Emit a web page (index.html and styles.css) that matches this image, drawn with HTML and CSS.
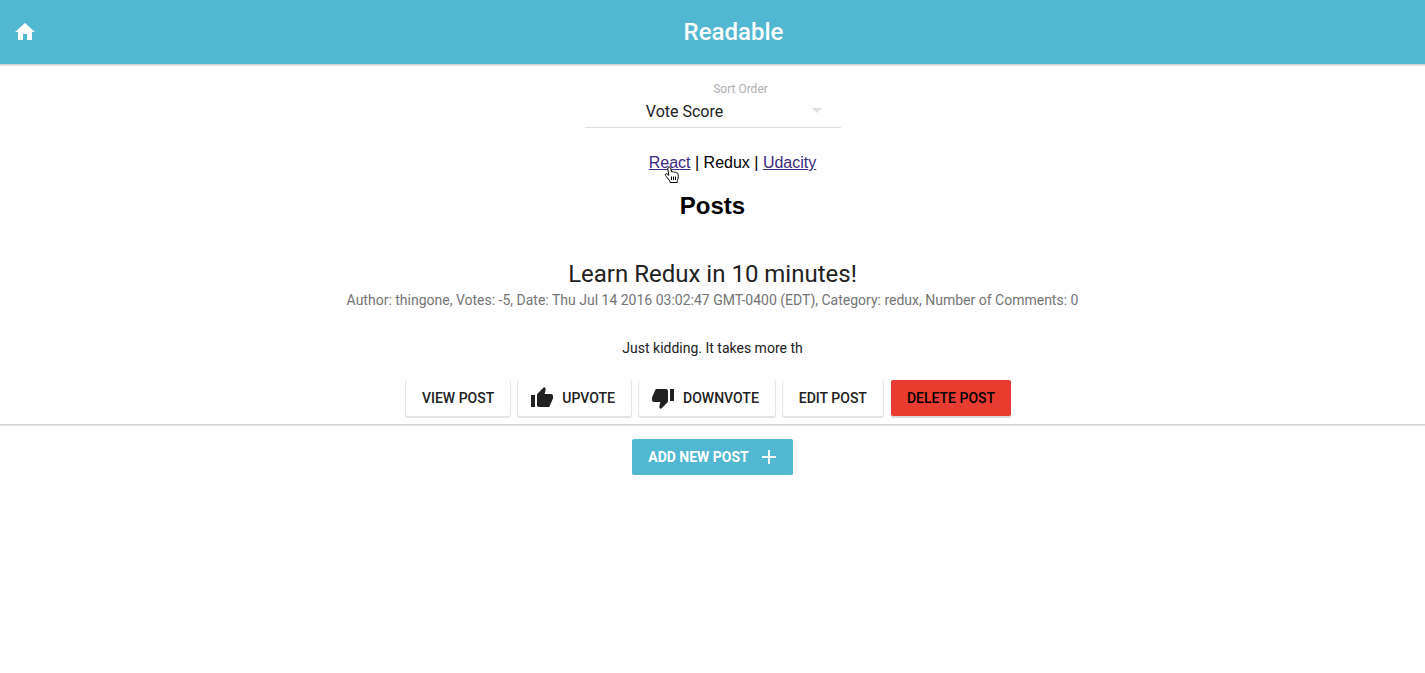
FILE: index.html
```html
<!DOCTYPE html>
<html lang="en">
<head>
<meta charset="utf-8">
<title>Readable</title>
<link rel="stylesheet" href="styles.css">
</head>
<body>
<header class="app-bar">
  <a class="home" href="#" aria-label="Home"><svg class="icon" viewBox="0 0 24 24"><path d="M10 20v-6h4v6h5v-8h3L12 3 2 12h3v8z"/></svg></a>
  <h1 class="app-title">Readable</h1>
</header>
<main>
  <div class="sort">
    <label class="sort-label" for="sort">Sort Order</label>
    <select class="sort-select" id="sort"><option>Vote Score</option><option>Date</option></select>
    <svg class="sort-arrow" viewBox="0 0 24 24" aria-hidden="true"><path d="M7 10l5 5 5-5z"/></svg>
  </div>
  <nav class="categories">
    <a class="category" href="#react">React<svg class="pointer" viewBox="0 0 16 18" aria-hidden="true"><path d="M4.6 1.2c.8-.5 1.7 0 2 .9l1.3 4c.7-.7 1.7-.5 2.1.2.8-.5 1.7-.2 2 .6.9-.4 1.8.1 2 1 .4 1.9.5 3.800-.2 5.300-.5 1-.6 1.500-.6 3.300H6.200c-.2-1.800-1.600-3-2.700-4.500C2.600 10.700 1.200 9.700 1.300 8.600c.2-1.100 1.600-1 2.500-.1l1 .9-1-6.500c-.1-.7.200-1.400.8-1.700z"/><path d="M7.500 10.500v3.500M9.500 10.500v3.500M11.500 10.500v3.500"/></svg></a> | Redux | <a class="category" href="#udacity">Udacity</a>
  </nav>
  <h2 class="heading">Posts</h2>
  <article class="post">
    <h3 class="post-title">Learn Redux in 10 minutes!</h3>
    <p class="post-meta">Author: thingone, Votes: -5, Date: Thu Jul 14 2016 03:02:47 GMT-0400 (EDT), Category: redux, Number of Comments: 0</p>
    <p class="post-body">Just kidding. It takes more th</p>
    <div class="actions">
      <button class="button">VIEW POST</button>
      <button class="button with-icon"><svg class="icon" viewBox="0 0 24 24"><path d="M1 21h4V9H1v12zm22-11c0-1.100-.9-2-2-2h-6.310l.95-4.570.03-.32c0-.41-.17-.79-.44-1.060L14.170 1 7.590 7.590C7.220 7.950 7 8.450 7 9v10c0 1.100.9 2 2 2h9c.83 0 1.540-.5 1.840-1.220l3.020-7.050c.09-.23.140-.47.140-.73v-2z"/></svg>UPVOTE</button>
      <button class="button with-icon"><svg class="icon" viewBox="0 0 24 24"><path d="M15 3H6c-.83 0-1.540.5-1.840 1.220l-3.020 7.050c-.09.23-.140.47-.140.73v2c0 1.100.9 2 2 2h6.310l-.95 4.570-.03.32c0 .41.17.79.44 1.060L9.830 23l6.590-6.590c.36-.36.58-.86.58-1.410V5c0-1.100-.9-2-2-2zm4 0v12h4V3h-4z"/></svg>DOWNVOTE</button>
      <button class="button">EDIT POST</button>
      <button class="button danger">DELETE POST</button>
    </div>
  </article>
  <div class="add">
    <button class="button primary">ADD NEW POST<svg class="icon" viewBox="0 0 24 24"><path d="M19 13h-6v6h-2v-6H5v-2h6V5h2v6h6v2z"/></svg></button>
  </div>
</main>
</body>
</html>
```
FILE: styles.css
```css
body {
  margin: 0;
  background: #fefefe;
  color: #000;
  font: 16px/20px "Liberation Sans", Arial, sans-serif;
  text-align: center;
}

.icon {
  width: 24px;
  height: 24px;
  fill: currentColor;
}

.app-bar {
  display: flex;
  align-items: center;
  height: 64px;
  padding: 0 13px;
  background: #52b8d1;
  color: #fff;
  box-shadow: 0 1px 0 #d2d2d2, 0 2px 0 #e6e6e6;
}

.home {
  display: flex;
  width: 28px;
  color: #fff;
}

.app-title {
  flex: 1;
  margin: 0;
  padding-left: 14px;
  font: 500 24px/64px Roboto, sans-serif;
}

.sort {
  position: relative;
  width: 256px;
  margin: 17px auto 25px;
  font-family: Roboto, sans-serif;
}

.sort-label {
  display: block;
  padding-left: 56px;
  color: #b0b0b0;
  font-size: 12px;
  line-height: 16px;
}

.sort-select {
  display: block;
  width: 100%;
  height: 31px;
  padding: 0 56px 0 0;
  border: 0;
  border-bottom: 1px solid #e0e0e0;
  border-radius: 0;
  appearance: none;
  background: none;
  color: #212121;
  font: 16px/28px Roboto, sans-serif;
  text-align: center;
}

.sort-arrow {
  position: absolute;
  right: 12px;
  bottom: 6px;
  width: 24px;
  height: 24px;
  fill: #e0e0e0;
  pointer-events: none;
}

.categories {
  padding-left: 40px;
  line-height: 20px;
}

.category {
  position: relative;
  color: #3b2a80;
}

.pointer {
  position: absolute;
  left: 15px;
  top: 12px;
  width: 16px;
  height: 18px;
  fill: #fff;
  stroke: #000;
}

.heading {
  margin: 19px 0 20px;
  font-size: 24px;
  line-height: 28px;
}

.post {
  padding: 16px 0 8px;
  background: #fefefe;
  color: #212121;
  font-family: Roboto, sans-serif;
  box-shadow: 0 1px 0 #d2d2d2, 0 2px 0 #e6e6e6;
}

.post-title {
  margin: 0;
  font-size: 24px;
  font-weight: 400;
  line-height: 36px;
}

.post-meta {
  margin: 0;
  color: #757575;
  font-size: 14px;
  line-height: 16px;
}

.post-body {
  margin: 32px 0 24px;
  font-size: 14px;
  line-height: 16px;
}

.actions {
  display: flex;
  flex-wrap: wrap;
  justify-content: center;
  gap: 8px;
  padding-right: 8px;
}

.button {
  display: inline-flex;
  align-items: center;
  justify-content: center;
  height: 36px;
  padding: 0 16px;
  border: 0;
  border-radius: 2px;
  background: #fefefe;
  color: #212121;
  font: 500 14px/36px Roboto, sans-serif;
  box-shadow: 0 1px 0 1px #e4e4e4;
}

.with-icon {
  gap: 8px;
  padding-left: 12px;
}

.danger {
  background: #e83c31;
  color: #000;
  box-shadow: 0 2px 0 #dcdcdc;
}

.add {
  padding-top: 15px;
}

.primary {
  gap: 8px;
  padding-right: 12px;
  background: #52b8d1;
  color: #fff;
  font-weight: 700;
  box-shadow: 0 2px 0 #dcdcdc;
}
```
